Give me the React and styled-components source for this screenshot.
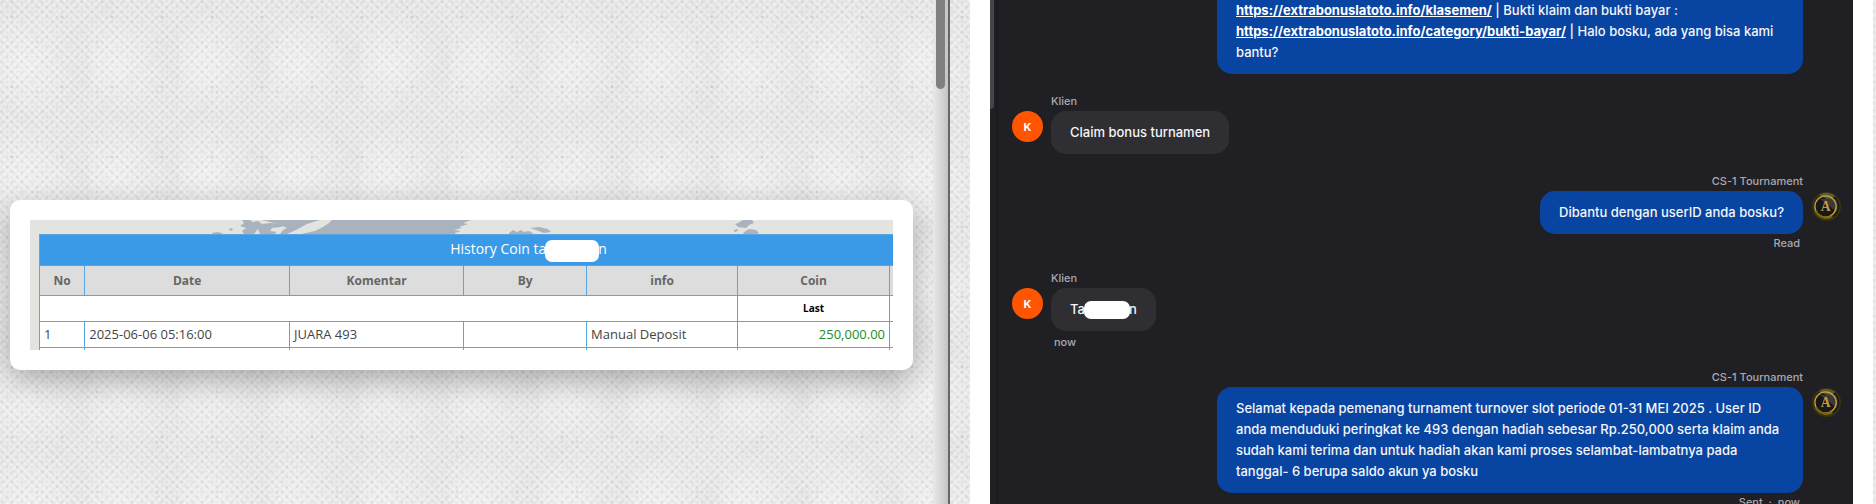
import styled, { createGlobalStyle } from 'styled-components'

const LINK = 'https://extrabonuslatoto.info'

const MapStrip = () => (
  <Map viewBox="0 0 863 14" preserveAspectRatio="none" aria-hidden="true">
    <g fill="#aab3bd">
      <path d="M199 9l3-1 1 2-3 1zM182 13l5-1 5 1v1h-10z" />
      <path d="M212 0h8l3 2 5-1 4 3 8-1 14 1-3 3-9 1-2 3 7 1-3 2h-14l-2-5-4 5h-10l-2-3 4-3-6-2 4-3z" />
      <path d="M302 0h139l-8 3 5 1-9 3 3 1-8 2 7 1-6 2v1H271l14-3 8-4 6-4z" />
      <path d="M232 0h58l-13 4-9 5-11 5h-7l3-4 4-2-7-3-10-3z" />
      <path d="M479 13l4-3 4 2 4-2 3 2 4-1 2 3h-21zM500 8l9-1 9 2 3 3-7 1-8-3zM496 14l3-3 5 3z" />
      <path d="M708 3l5-3h9l2 3-5 2-3 3-8-1-3-3zM704 10l3-1 1 2-4 1zM714 12l5-3 7 1 3 3-2 1h-14z" />
    </g>
  </Map>
)

const Agent = () => (
  <AgentLogo viewBox="0 0 32 32" role="img" aria-label="CS-1 Tournament">
    <circle cx="16" cy="16" r="15" fill="#37330f" />
    <circle cx="16" cy="16" r="13" fill="#18171a" />
    <path d="M8 4a15 15 0 0 1 17 1l-5 5-8-4z" fill="#5d593b" />
    <path d="M9 8l12 9 5 5a12 12 0 0 0-1-14z" fill="#3c3a38" />
    <circle cx="15" cy="16" r="11" fill="none" stroke="#c1a235" strokeWidth="1.4" />
    <path d="M5 21a12 12 0 0 0 17 5" fill="none" stroke="#75640d" strokeWidth="2.5" />
    <text x="15" y="21" textAnchor="middle" fontFamily="Liberation Serif, serif" fontWeight="700" fontSize="14" fill="#c79b3c">A</text>
  </AgentLogo>
)

const ClientMessage = ({ children, status }) => (
  <Message>
    <Avatar>K</Avatar>
    <Stack>
      <Name>Klien</Name>
      <Bubble>{children}</Bubble>
      {status && <Status>{status}</Status>}
    </Stack>
  </Message>
)

const AgentMessage = ({ children, status }) => (
  <Message $own>
    <Stack $own>
      <Name>CS-1 Tournament</Name>
      <Bubble $own>{children}</Bubble>
      {status && <Status $own>{status}</Status>}
    </Stack>
    <Agent />
  </Message>
)

const App = () => {
  return (
    <>
      <GlobalStyle />
      <Page>
        <Proof>
          <ProofBody>
            <Card>
              <Shot>
                <MapStrip />
                <History>
                  <colgroup>
                    <Col $w={5.3} />
                    <Col $w={24} />
                    <Col $w={20.4} />
                    <Col $w={14.4} />
                    <Col $w={17.7} />
                    <Col $w={17.8} />
                    <col />
                  </colgroup>
                  <thead>
                    <tr>
                      <Title colSpan="7">History Coin ta<Mask $w={54} $h={22} />n</Title>
                    </tr>
                    <tr>
                      <Head>No</Head>
                      <Head>Date</Head>
                      <Head>Komentar</Head>
                      <Head>By</Head>
                      <Head>info</Head>
                      <Head>Coin</Head>
                      <Head as="td" />
                    </tr>
                  </thead>
                  <tbody>
                    <tr>
                      <Cell colSpan="5" />
                      <Last>Last</Last>
                      <Cell />
                    </tr>
                    <tr>
                      <Cell>1</Cell>
                      <Cell>2025-06-06 05:16:00</Cell>
                      <Cell>JUARA 493</Cell>
                      <Cell />
                      <Cell>Manual Deposit</Cell>
                      <Amount>250,000.00</Amount>
                      <Cell />
                    </tr>
                    <Rest>
                      <td />
                      <td />
                      <td />
                      <td />
                      <td />
                      <td />
                      <td />
                    </Rest>
                  </tbody>
                </History>
              </Shot>
            </Card>
          </ProofBody>
          <Track>
            <Thumb />
          </Track>
        </Proof>
        <ChatFrame>
          <Chat>
            <ChatTrack>
              <ChatThumb />
            </ChatTrack>
            <Thread>
              <Message $own>
                <Stack $own>
                  <Bubble $own $cut>
                    <Link href={LINK + '/klasemen/'}>https://extrabonuslatoto.info/klasemen/</Link> | Bukti klaim dan bukti bayar :<br />
                    <Link href={LINK + '/category/bukti-bayar/'}>https://extrabonuslatoto.info/category/bukti-bayar/</Link> | Halo bosku, ada yang bisa kami bantu?
                  </Bubble>
                </Stack>
                <Spacer />
              </Message>
              <ClientMessage>Claim bonus turnamen</ClientMessage>
              <AgentMessage status="Read">Dibantu dengan userID anda bosku?</AgentMessage>
              <ClientMessage status="now">Ta<Mask $w={46} $h={18} />n</ClientMessage>
              <AgentMessage status={'Sent\u00a0 ·\u00a0 now'}>
                Selamat kepada pemenang turnament turnover slot periode 01-31 MEI 2025 . User ID anda menduduki peringkat ke 493 dengan hadiah sebesar Rp.250,000 serta klaim anda sudah kami terima dan untuk hadiah akan kami proses selambat-lambatnya pada tanggal- 6 berupa saldo akun ya bosku
              </AgentMessage>
            </Thread>
          </Chat>
        </ChatFrame>
      </Page>
    </>
  )
}
export default App

const GlobalStyle = createGlobalStyle`
* {
  box-sizing: border-box;
}
body {
  margin: 0;
  background-color: #e3e3e3;
  background-image:
    radial-gradient(circle at 12px 17px, rgba(0,0,0,0.16) 0, transparent 2px),
    radial-gradient(circle at 37px 42px, rgba(0,0,0,0.12) 0, transparent 2px),
    radial-gradient(circle at 2px 2px, rgba(0,0,0,0.1) 0, transparent 2px),
    radial-gradient(circle at 7px 7px, rgba(0,0,0,0.1) 0, transparent 2px),
    radial-gradient(ellipse at 30% 60%, rgba(255,255,255,0.35), transparent 60%),
    repeating-linear-gradient(45deg, rgba(255,255,255,0.25) 0 2px, transparent 2px 5px),
    repeating-linear-gradient(135deg, rgba(255,255,255,0.25) 0 2px, transparent 2px 5px);
  background-size: 50px 70px, 60px 50px, 10px 10px, 10px 10px, 90px 110px, auto, auto;
}
`
const Page = styled.main`
display: flex;
height: 100vh;
overflow: hidden;
padding-right: 3px;
`
const Proof = styled.section`
display: flex;
flex: 948;
min-width: 0;
border-right: 2px solid #666;
`
const ProofBody = styled.div`
flex: 1;
min-width: 0;
padding: 200px 20px 0 10px;
`
const Card = styled.div`
padding: 20px;
border-radius: 10px;
background: #fff;
box-shadow: 0 10px 30px rgba(0, 0, 0, 0.28);
`
const Shot = styled.div`
height: 130px;
overflow: hidden;
padding-left: 9px;
background: linear-gradient(#e3e4df, #e3e4df) left / 9px 100% no-repeat;
`
const Map = styled.svg`
display: block;
width: calc(100% + 9px);
height: 14px;
margin-left: -9px;
background: #e3e4df;
`
const History = styled.table`
width: 100%;
table-layout: fixed;
border-collapse: collapse;
background: #fff;
font-family: 'Open Sans', 'Noto Sans', sans-serif;
font-size: 13px;
color: #444;
td, th {
  border: 1px solid #58a6e2;
  border-right: none;
}
`
const Col = styled.col`
width: ${({ $w }) => $w}%;
`
const Title = styled.th`
height: 31px;
padding: 0 0 0 124px;
background: #3a9ae8;
color: #fff;
font-size: 14px;
font-weight: 400;
line-height: 22px;
white-space: nowrap;
`
const Mask = styled.span`
display: inline-block;
width: ${({ $w }) => $w}px;
height: ${({ $h }) => $h}px;
margin: 0 -1px;
border-radius: 7px;
background: #fff;
vertical-align: middle;
`
const Head = styled.th`
height: 30px;
padding: 0;
background: #ddd;
color: #666;
font-size: 12px;
font-weight: 700;
`
const Cell = styled.td`
height: 26px;
padding: 0 4px 2px;
line-height: 20px;
white-space: nowrap;
`
const Last = styled(Cell)`
color: #000;
font-size: 10px;
font-weight: 700;
text-align: center;
`
const Amount = styled(Cell)`
color: #228b22;
text-align: right;
`
const Rest = styled.tr`
height: 26px;
`
const Track = styled.div`
width: 15px;
padding: 0 3px;
background: linear-gradient(90deg, #e9e9e9, #c4c4c4);
`
const Thumb = styled.div`
width: 9px;
height: 89px;
border-radius: 0 0 5px 5px;
background: #808080;
`
const ChatFrame = styled.section`
display: flex;
flex: 863;
min-width: 0;
margin-left: 20px;
padding: 0 20px;
background: #fff;
`
const Chat = styled.div`
display: flex;
flex: 1;
min-width: 0;
background: #202024;
font-family: Inter, sans-serif;
`
const ChatTrack = styled.div`
width: 8px;
border-right: 2px solid #1b1b1f;
`
const ChatThumb = styled.div`
width: 4px;
height: 109px;
border-radius: 0 0 4px 0;
background: #44464d;
`
const Thread = styled.div`
display: flex;
flex: 1;
flex-direction: column;
gap: 17px;
min-width: 0;
padding: 0 11px 0 14px;
`
const Message = styled.div`
display: flex;
flex-shrink: 0;
gap: 8px;
justify-content: ${({ $own }) => ($own ? 'flex-end' : 'flex-start')};
`
const Stack = styled.div`
display: flex;
flex-direction: column;
align-items: ${({ $own }) => ($own ? 'flex-end' : 'flex-start')};
max-width: 586px;
`
const Name = styled.div`
padding: 2px 0;
font-size: 11px;
font-weight: 500;
line-height: 16px;
color: #a9a9b2;
`
const Bubble = styled.div`
padding: ${({ $cut }) => ($cut ? '0 19px 11px' : '11px 19px')};
border-radius: ${({ $cut }) => ($cut ? '0 0 15px 15px' : '15px')};
background: ${({ $own }) => ($own ? '#0845a3' : '#2e2e33')};
color: #f5f5f7;
font-size: 13px;
font-weight: 500;
line-height: 21px;
`
const Link = styled.a`
color: #fff;
font-weight: 700;
text-decoration: underline;
`
const Status = styled.div`
margin-top: ${({ $own }) => ($own ? '2px' : '4px')};
padding: 0 3px;
font-size: 11px;
font-weight: 500;
line-height: 15px;
color: #a9a9b2;
`
const Avatar = styled.div`
display: flex;
flex-shrink: 0;
align-items: center;
justify-content: center;
width: 31px;
height: 31px;
margin-top: 20px;
border-radius: 50%;
background: #ff5500;
color: #fff;
font-size: 11px;
font-weight: 700;
`
const AgentLogo = styled.svg`
flex-shrink: 0;
width: 31px;
height: 31px;
margin-top: 20px;
`
const Spacer = styled.div`
flex-shrink: 0;
width: 31px;
`
